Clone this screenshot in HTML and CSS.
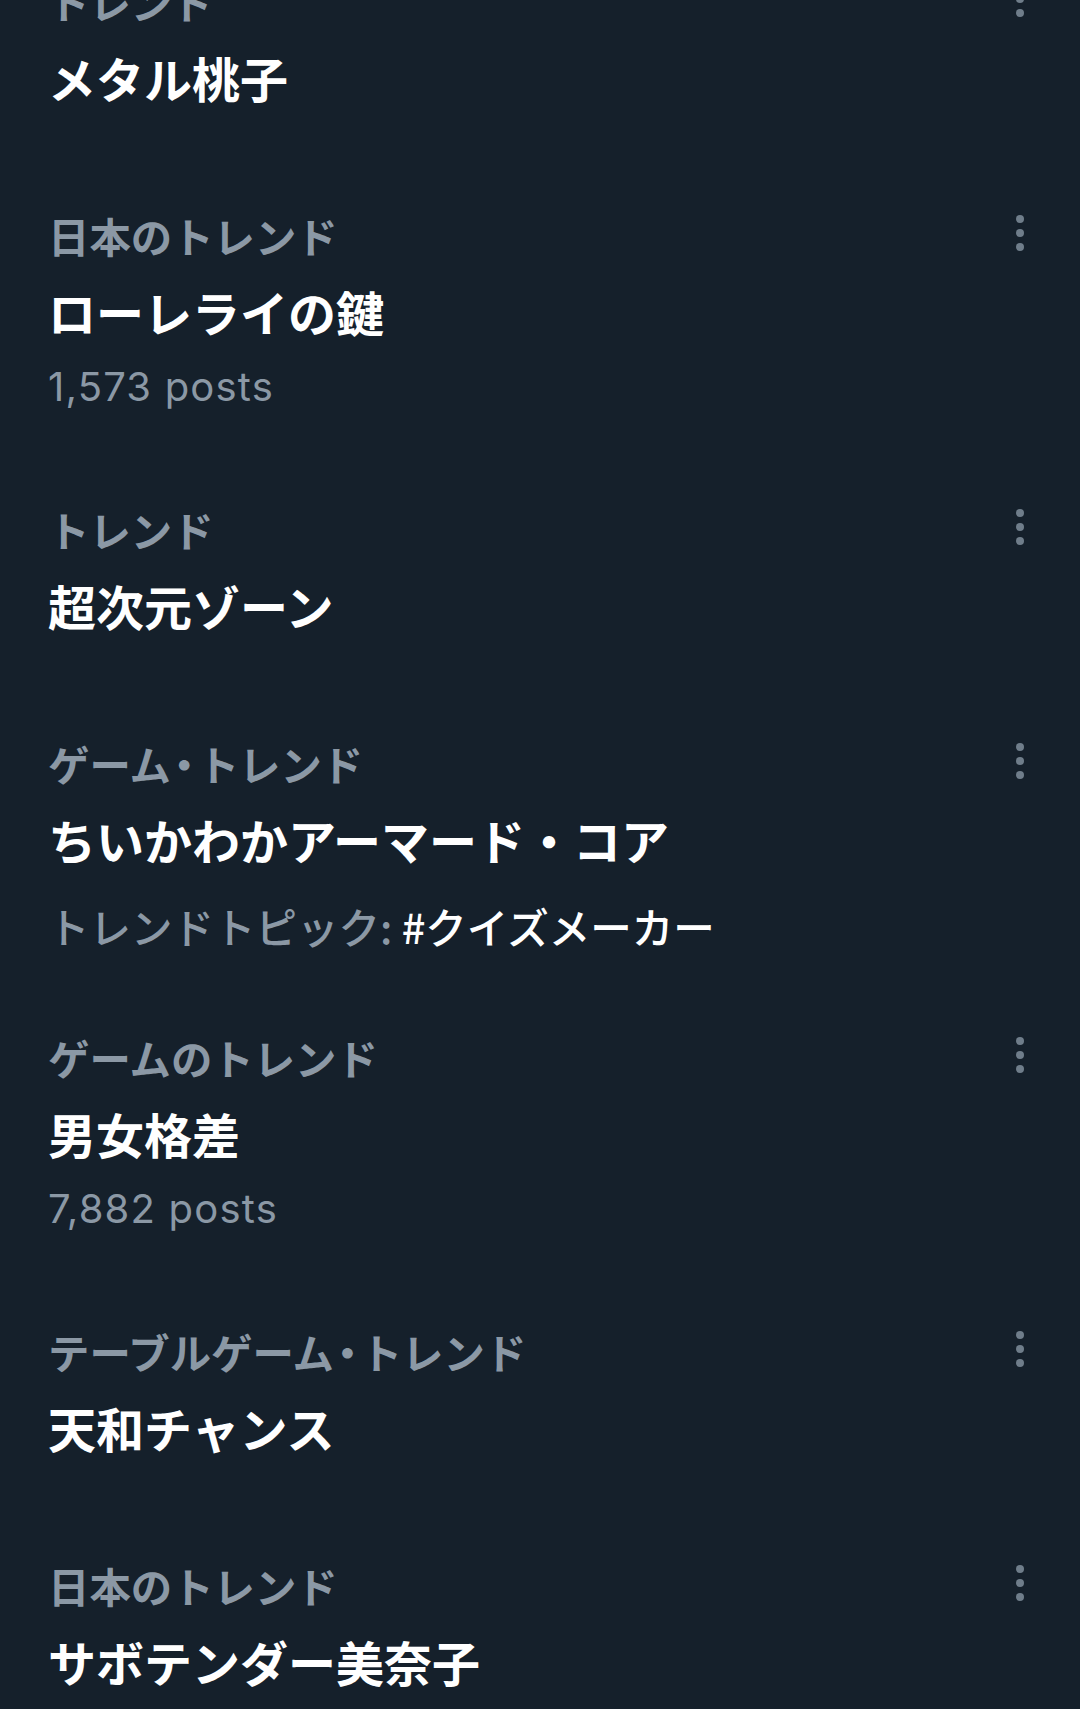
FILE: index.html
```html
<!DOCTYPE html>
<html lang="ja">
<head>
<meta charset="utf-8">
<title>Trends</title>
<link rel="stylesheet" href="styles.css">
</head>
<body>
<main class="trends">
  <div class="item">
    <div class="head"><span class="cat">トレンド</span><svg class="more" viewBox="0 0 8 36"><circle cx="4" cy="4" r="4"/><circle cx="4" cy="18" r="4"/><circle cx="4" cy="32" r="4"/></svg></div>
    <div class="title">メタル桃子</div>
  </div>
  <div class="item item-posts">
    <div class="head"><span class="cat">日本のトレンド</span><svg class="more" viewBox="0 0 8 36"><circle cx="4" cy="4" r="4"/><circle cx="4" cy="18" r="4"/><circle cx="4" cy="32" r="4"/></svg></div>
    <div class="title">ローレライの鍵</div>
    <div class="posts">1,573 posts</div>
  </div>
  <div class="item">
    <div class="head"><span class="cat">トレンド</span><svg class="more" viewBox="0 0 8 36"><circle cx="4" cy="4" r="4"/><circle cx="4" cy="18" r="4"/><circle cx="4" cy="32" r="4"/></svg></div>
    <div class="title">超次元ゾーン</div>
  </div>
  <div class="item item-topic">
    <div class="head"><span class="cat">ゲーム<span class="dot">・</span>トレンド</span><svg class="more" viewBox="0 0 8 36"><circle cx="4" cy="4" r="4"/><circle cx="4" cy="18" r="4"/><circle cx="4" cy="32" r="4"/></svg></div>
    <div class="title">ちいかわかアーマード・コア</div>
    <div class="topic">トレンドトピック: <span class="tag">#クイズメーカー</span></div>
  </div>
  <div class="item item-posts">
    <div class="head"><span class="cat">ゲームのトレンド</span><svg class="more" viewBox="0 0 8 36"><circle cx="4" cy="4" r="4"/><circle cx="4" cy="18" r="4"/><circle cx="4" cy="32" r="4"/></svg></div>
    <div class="title">男女格差</div>
    <div class="posts">7,882 posts</div>
  </div>
  <div class="item">
    <div class="head"><span class="cat">テーブルゲーム<span class="dot">・</span>トレンド</span><svg class="more" viewBox="0 0 8 36"><circle cx="4" cy="4" r="4"/><circle cx="4" cy="18" r="4"/><circle cx="4" cy="32" r="4"/></svg></div>
    <div class="title">天和チャンス</div>
  </div>
  <div class="item">
    <div class="head"><span class="cat">日本のトレンド</span><svg class="more" viewBox="0 0 8 36"><circle cx="4" cy="4" r="4"/><circle cx="4" cy="18" r="4"/><circle cx="4" cy="32" r="4"/></svg></div>
    <div class="title">サボテンダー美奈子</div>
  </div>
</main>
</body>
</html>
```
FILE: styles.css
```css
html, body {
  margin: 0;
  padding: 0;
  background: #15202b;
  height: 100%;
  overflow: hidden;
}

body {
  font-family: "Noto Sans CJK JP", "Noto Sans", sans-serif;
  color: #8b98a5;
}

.trends {
  margin-top: -75px;
  display: flex;
  flex-direction: column;
}

.item {
  padding: 48px 56px 50px 48px;
  display: flex;
  flex-direction: column;
}

.item-posts {
  padding-bottom: 48px;
}

.item-topic {
  padding-bottom: 37px;
}

.head {
  display: flex;
  justify-content: space-between;
  align-items: center;
  height: 56px;
}

.cat {
  font-size: 41.4px;
  line-height: 56px;
  font-weight: 700;
  color: #8b98a5;
  white-space: nowrap;
}

.dot {
  font-feature-settings: "halt";
  padding: 0 3px;
}

.more {
  width: 8px;
  height: 36px;
  fill: #6f7d8a;
  margin-bottom: 4px;
}

.title {
  margin-top: 16px;
  font-size: 48px;
  line-height: 64px;
  font-weight: 700;
  color: #ffffff;
  white-space: nowrap;
}

.posts {
  margin-top: 26px;
  font-family: "Inter", "Noto Sans", sans-serif;
  font-size: 40px;
  letter-spacing: 1.2px;
  line-height: 36px;
  color: #8b98a5;
}

.topic {
  margin-top: 37px;
  font-size: 41.5px;
  line-height: 36px;
  font-weight: 500;
  color: #8b98a5;
  white-space: nowrap;
}

.tag {
  color: #ffffff;
  font-weight: 500;
}
```
